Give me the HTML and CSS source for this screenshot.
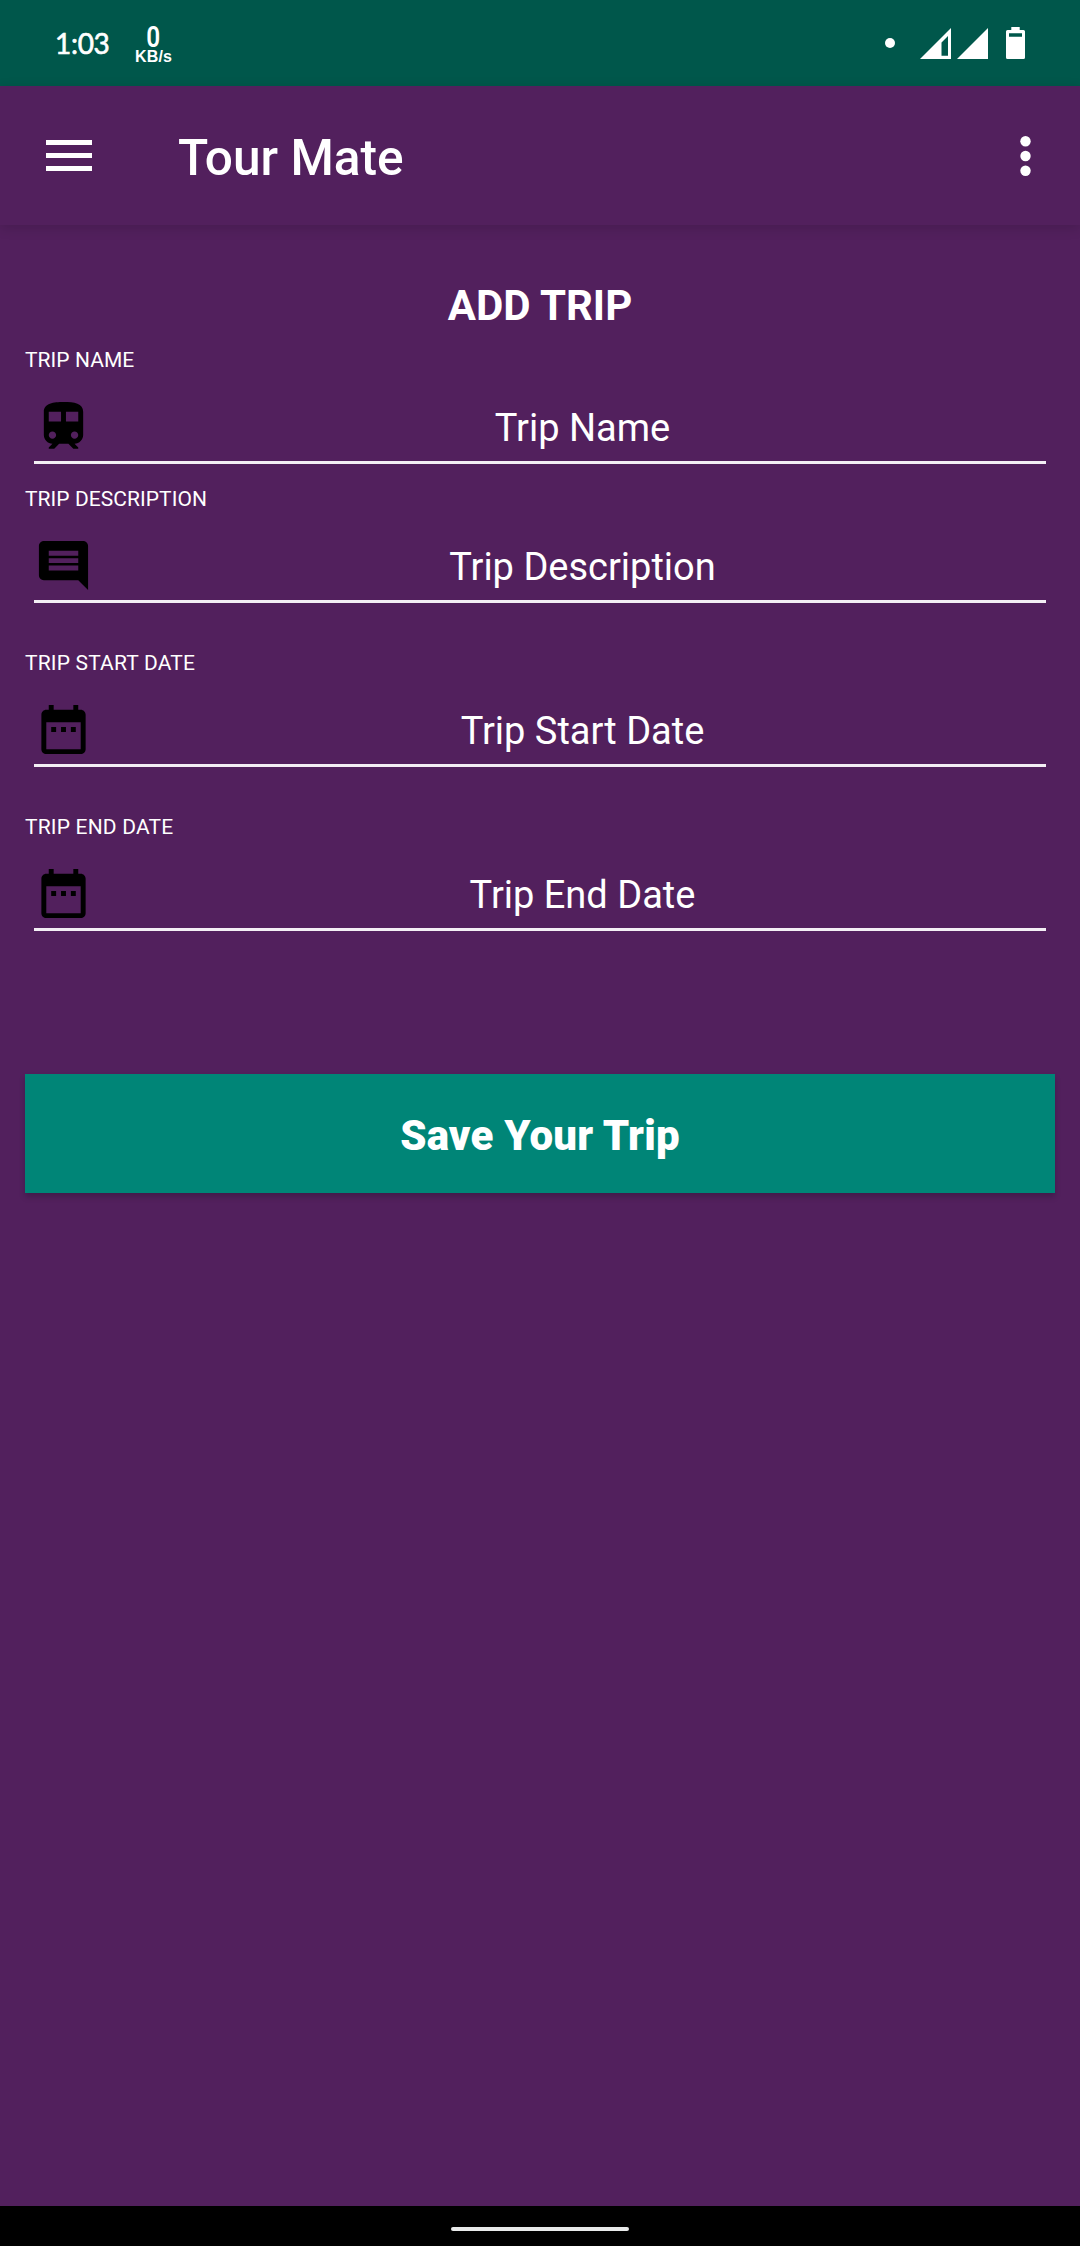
FILE: index.html
```html
<!DOCTYPE html>
<html lang="en">
<head>
<meta charset="utf-8">
<title>Tour Mate</title>
<link rel="stylesheet" href="styles.css">
</head>
<body>
<div class="status-bar">
  <span class="clock">1:03</span>
  <div class="net-speed"><span class="net-value">0</span><span class="net-unit">KB/s</span></div>
  <div class="status-icons">
    <span class="dot"></span>
    <svg class="signal" width="31" height="31" viewBox="0 0 31 31"><path fill-rule="evenodd" d="M31 0V31H0ZM28 8L21.500 14.500V27.700H28Z"/></svg>
    <svg class="signal second" width="31" height="31" viewBox="0 0 31 31"><path d="M31 0V31H0Z"/></svg>
    <svg class="battery" width="19" height="32" viewBox="0 0 19 32"><path fill-rule="evenodd" d="M5.300 0H13.700V3H17.500Q19 3 19 4.500V30.500Q19 32 17.500 32H1.500Q0 32 0 30.500V4.500Q0 3 1.500 3H5.300ZM3 6.300V9.700H16V6.300Z"/></svg>
  </div>
</div>
<header class="app-bar">
  <svg class="menu" width="46" height="31" viewBox="0 0 46 31"><path d="M0 0H46V5H0ZM0 13H46V18H0ZM0 26H46V31H0Z"/></svg>
  <h1 class="title">Tour Mate</h1>
  <svg class="more" width="12" height="40" viewBox="0 0 12 40"><circle cx="6.500" cy="5.300" r="5.200"/><circle cx="6.500" cy="20" r="5.200"/><circle cx="6.500" cy="34.700" r="5.200"/></svg>
</header>
<main class="content">
  <h2 class="heading">ADD TRIP</h2>
  <div class="field">
    <div class="label">TRIP NAME</div>
    <div class="input">
      <svg class="icon" viewBox="0 0 24 24"><path d="M12 2c-4 0-8 .5-8 4v9.500C4 17.430 5.570 19 7.500 19L6 20.500v.5h2.230l2-2H14l2 2h2v-.5L16.500 19c1.930 0 3.500-1.570 3.500-3.500V6c0-3.500-3.580-4-8-4zM7.500 17c-.83 0-1.500-.67-1.500-1.500S6.670 14 7.500 14s1.500.67 1.500 1.500S8.330 17 7.500 17zm3.500-7H6V6h5v4zm2 0V6h5v4h-5zm3.500 7c-.83 0-1.500-.67-1.500-1.500s.67-1.500 1.500-1.500 1.500.67 1.500 1.500-.67 1.500-1.500 1.500z"/></svg>
      <span class="hint">Trip Name</span>
    </div>
  </div>
  <div class="field">
    <div class="label">TRIP DESCRIPTION</div>
    <div class="input">
      <svg class="icon" viewBox="0 0 24 24"><path d="M21.990 4c0-1.100-.89-2-1.990-2H4c-1.100 0-2 .9-2 2v12c0 1.100.9 2 2 2h14l4 4-.01-18zM18 14H6v-2h12v2zm0-3H6V9h12v2zm0-3H6V6h12v2z"/></svg>
      <span class="hint">Trip Description</span>
    </div>
  </div>
  <div class="field spaced">
    <div class="label wide">TRIP START DATE</div>
    <div class="input">
      <svg class="icon" viewBox="0 0 24 24"><path d="M9 11H7v2h2v-2zm4 0h-2v2h2v-2zm4 0h-2v2h2v-2zm2-7h-1V2h-2v2H8V2H6v2H5c-1.110 0-1.990.9-1.990 2L3 20c0 1.100.89 2 2 2h14c1.100 0 2-.9 2-2V6c0-1.100-.9-2-2-2zm0 16H5V9h14v11z"/></svg>
      <span class="hint">Trip Start Date</span>
    </div>
  </div>
  <div class="field spaced">
    <div class="label wide">TRIP END DATE</div>
    <div class="input">
      <svg class="icon" viewBox="0 0 24 24"><path d="M9 11H7v2h2v-2zm4 0h-2v2h2v-2zm4 0h-2v2h2v-2zm2-7h-1V2h-2v2H8V2H6v2H5c-1.110 0-1.990.9-1.990 2L3 20c0 1.100.89 2 2 2h14c1.100 0 2-.9 2-2V6c0-1.100-.9-2-2-2zm0 16H5V9h14v11z"/></svg>
      <span class="hint">Trip End Date</span>
    </div>
  </div>
  <button class="save" type="button">Save Your Trip</button>
</main>
<footer class="nav-bar"><span class="handle"></span></footer>
</body>
</html>
```

FILE: styles.css
```css
* { box-sizing: border-box; }

body {
  margin: 0;
  height: 2246px;
  display: flex;
  flex-direction: column;
  overflow: hidden;
  background: #52205d;
  color: #fff;
  font-family: Roboto, "Noto Sans", sans-serif;
}

svg { display: block; flex: none; fill: #fff; }

.status-bar {
  flex: none;
  display: flex;
  align-items: center;
  height: 86px;
  padding: 0 55px;
  background: #00574b;
}
.clock {
  width: 55px;
  font: 400 28px/34px Lato, sans-serif;
  letter-spacing: -0.3px;
  white-space: nowrap;
  -webkit-text-stroke: 0.6px #fff;
}
.net-speed {
  display: flex;
  flex-direction: column;
  align-items: center;
  width: 38px;
  margin: 3px 0 0 24px;
}
.net-value {
  font-size: 29px;
  font-weight: 600;
  line-height: 24px;
  transform: scaleX(0.84);
}
.net-unit {
  margin-left: 1px;
  font: bold 16px/16px "Liberation Sans", sans-serif;
  letter-spacing: 0.2px;
}
.status-icons { display: flex; align-items: center; margin-left: auto; }
.dot { width: 10px; height: 10px; border-radius: 50%; background: #fff; }
.signal { margin-left: 25px; }
.signal.second { margin-left: 6px; }
.battery { margin-left: 18px; }

.app-bar {
  flex: none;
  display: flex;
  align-items: center;
  height: 139px;
  padding: 0 49px 0 46px;
  box-shadow: 0 3px 12px rgba(0, 0, 0, 0.14);
}
.title {
  margin: 5px 0 0 86px;
  font-size: 49.6px;
  font-weight: 500;
  line-height: 60px;
}
.more { margin-left: auto; overflow: visible; }

.content {
  flex: 1;
  display: flex;
  flex-direction: column;
  padding: 56px 25px 0;
}
.heading {
  margin: 0;
  font-size: 42px;
  font-weight: 700;
  line-height: 50px;
  text-align: center;
}
.field { height: 139px; padding-top: 15px; }
.field:first-of-type { height: 133px; padding-top: 9px; }
.field.spaced { height: 164px; padding-top: 40px; }
.label {
  height: 40px;
  font-size: 21px;
  line-height: 40px;
  letter-spacing: 0.06px;
}
.label.wide { letter-spacing: 0.18px; }
.input {
  display: flex;
  align-items: flex-start;
  height: 84px;
  margin: 0 9px;
  padding-top: 17px;
  border-bottom: 3px solid #f4eff5;
}
.icon { width: 59px; height: 59px; fill: #000; }
.hint {
  flex: 1;
  margin: 8px 0 0 26px;
  font-size: 38px;
  line-height: 46px;
  text-align: center;
}
.save {
  height: 119px;
  margin-top: 143px;
  padding: 4px 0 0;
  border: 0;
  background: #008577;
  box-shadow: 0 4px 6px rgba(0, 0, 0, 0.2);
  color: #fff;
  font: 900 42px/50px Roboto, sans-serif;
  letter-spacing: 0.2px;
}

.nav-bar {
  flex: none;
  display: flex;
  align-items: center;
  justify-content: center;
  height: 40px;
  padding-top: 6px;
  background: #000;
}
.handle { width: 178px; height: 4px; border-radius: 2px; background: #e8eaea; }
```
